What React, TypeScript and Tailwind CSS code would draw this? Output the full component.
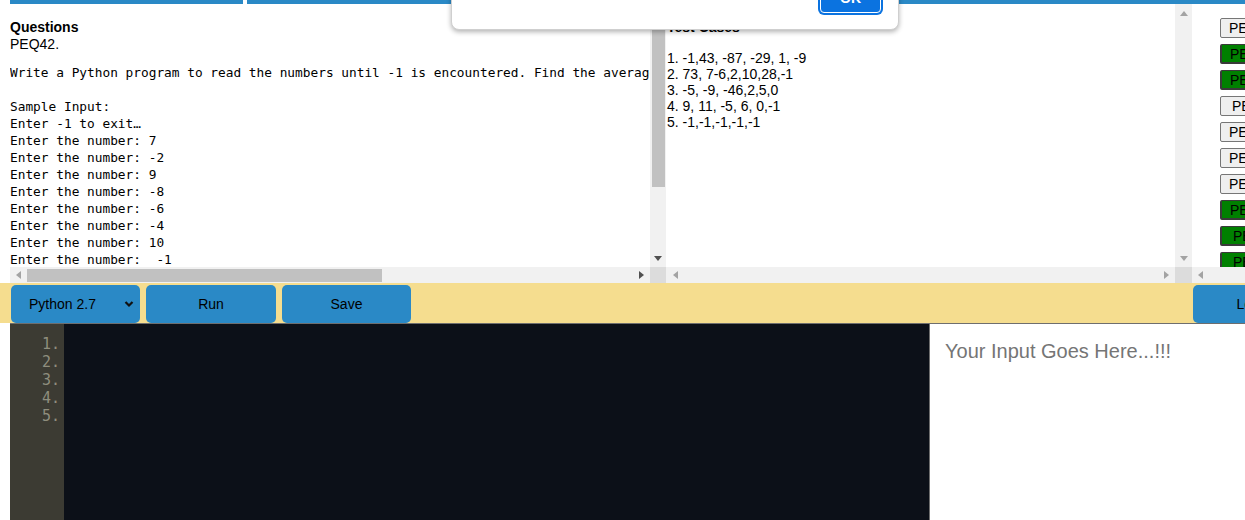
import React from "react";

const BLUE = "bg-[#2a89c6]";

function TriUp({ dark }: { dark?: boolean }) {
  return (
    <svg width="8" height="5" viewBox="0 0 8 5">
      <polygon points="0,5 8,5 4,0" fill={dark ? "#505050" : "#a3a3a3"} />
    </svg>
  );
}
function TriDown({ dark }: { dark?: boolean }) {
  return (
    <svg width="8" height="5" viewBox="0 0 8 5">
      <polygon points="0,0 8,0 4,5" fill={dark ? "#505050" : "#a3a3a3"} />
    </svg>
  );
}
function TriLeft({ dark }: { dark?: boolean }) {
  return (
    <svg width="5" height="8" viewBox="0 0 5 8">
      <polygon points="5,0 5,8 0,4" fill={dark ? "#505050" : "#a3a3a3"} />
    </svg>
  );
}
function TriRight({ dark }: { dark?: boolean }) {
  return (
    <svg width="5" height="8" viewBox="0 0 5 8">
      <polygon points="0,0 0,8 5,4" fill={dark ? "#505050" : "#a3a3a3"} />
    </svg>
  );
}

const sampleLines = [
  "Sample Input:",
  "Enter -1 to exit…",
  "Enter the number: 7",
  "Enter the number: -2",
  "Enter the number: 9",
  "Enter the number: -8",
  "Enter the number: -6",
  "Enter the number: -4",
  "Enter the number: 10",
  "Enter the number:  -1",
  "Sample Output:",
  "Average: 1.0",
];

const testCases = [
  "1. -1,43, -87, -29, 1, -9",
  "2. 73, 7-6,2,10,28,-1",
  "3. -5, -9, -46,2,5,0",
  "4. 9, 11, -5, 6, 0,-1",
  "5. -1,-1,-1,-1,-1",
];

const qButtons: { label: string; green: boolean; shift: boolean }[] = [
  { label: "PEQ40.", green: false, shift: false },
  { label: "PEQ41.", green: true, shift: false },
  { label: "PEQ42.", green: true, shift: false },
  { label: "PEQ43.", green: false, shift: true },
  { label: "PEQ44.", green: false, shift: false },
  { label: "PEQ45.", green: false, shift: false },
  { label: "PEQ46.", green: false, shift: false },
  { label: "PEQ47.", green: true, shift: false },
  { label: "PEQ48.", green: true, shift: true },
  { label: "PEQ49.", green: true, shift: true },
];

export default function App() {
  return (
    <div className="relative w-[1245px] h-[520px] overflow-hidden bg-white font-['Liberation_Sans',Arial,sans-serif] text-black">
      {/* top tab bar */}
      <div className="flex h-[4px] pl-[10px] gap-[4px]">
        <div className={`w-[233px] ${BLUE}`} />
        <div className={`flex-1 ${BLUE}`} />
      </div>

      {/* panels */}
      <div className="flex h-[263px]">
        <div className="w-[10px] shrink-0" />
        {/* questions */}
        <div className="w-[640px] shrink-0 overflow-hidden pt-[15px]">
          <div className="text-[14px] leading-[17px] font-bold">Questions</div>
          <div className="text-[14px] leading-[17px]">PEQ42.</div>
          <pre className="mt-[11px] font-['DejaVu_Sans_Mono',monospace] text-[12.8px] leading-[17px] whitespace-pre">
            {"Write a Python program to read the numbers until -1 is encountered. Find the average of the numbers excluding -1.\n\n"}
            {sampleLines.join("\n")}
          </pre>
        </div>
        {/* vscroll left */}
        <div className="w-[16px] shrink-0 bg-[#f1f1f1] flex flex-col items-center">
          <div className="h-[16px] w-full flex items-center justify-center">
            <TriUp dark />
          </div>
          <div className="h-[167px] w-[13px] bg-[#c1c1c1]" />
          <div className="flex-1" />
          <div className="h-[18px] w-full flex items-center justify-center">
            <TriDown dark />
          </div>
        </div>
        {/* test cases */}
        <div className="w-[509px] shrink-0 overflow-hidden pt-[15px] pl-[1px]">
          <div className="text-[14px] leading-[17px] font-bold">Test Cases</div>
          <div className="mt-[14px] text-[14px] leading-[16px]">
            {testCases.map((t) => (
              <div key={t}>{t}</div>
            ))}
          </div>
        </div>
        {/* vscroll middle */}
        <div className="w-[17px] shrink-0 bg-[#f1f1f1] flex flex-col items-center justify-between">
          <div className="h-[18px] w-full flex items-center justify-center">
            <TriUp />
          </div>
          <div className="h-[18px] w-full flex items-center justify-center">
            <TriDown />
          </div>
        </div>
        {/* question list */}
        <div className="flex-1 overflow-hidden pt-[14px] pl-[28px] flex flex-col gap-[6px]">
          {qButtons.map((b) => (
            <div
              key={b.label}
              className={`h-[20px] w-[80px] shrink-0 text-[14px] leading-[18px] rounded-[2px] ${
                b.shift ? "pl-[11px]" : "pl-[8px]"
              } ${
                b.green
                  ? "bg-[#008000] border border-[#3a3a3a] border-l-2 border-b-2"
                  : "bg-[#efefef] border border-[#767676]"
              }`}
            >
              {b.label}
            </div>
          ))}
        </div>
      </div>

      {/* horizontal scrollbars */}
      <div className="flex h-[16px]">
        <div className="w-[10px] shrink-0" />
        <div className="w-[640px] shrink-0 bg-[#f1f1f1] flex items-center">
          <div className="w-[16px] flex justify-center">
            <TriLeft />
          </div>
          <div className="ml-[1px] w-[355px] h-[13px] bg-[#c1c1c1]" />
          <div className="flex-1" />
          <div className="w-[18px] flex justify-center">
            <TriRight dark />
          </div>
        </div>
        <div className="w-[16px] shrink-0 bg-[#dcdcdc]" />
        <div className="w-[509px] shrink-0 bg-[#f1f1f1] flex items-center justify-between">
          <div className="w-[18px] flex justify-center">
            <TriLeft />
          </div>
          <div className="w-[18px] flex justify-center">
            <TriRight />
          </div>
        </div>
        <div className="w-[17px] shrink-0 bg-[#dcdcdc]" />
        <div className="flex-1 bg-[#f1f1f1] flex items-center">
          <div className="w-[17px] flex justify-center">
            <TriLeft />
          </div>
        </div>
      </div>

      {/* toolbar */}
      <div className="flex h-[40px] bg-[#f5dd8f] pl-[11px] pt-[2px] gap-[6px]">
        <div className={`w-[129px] h-[38px] rounded-[5px] ${BLUE} flex items-center pl-[18px] pr-[6px] text-[14px]`}>
          <span className="flex-1">Python 2.7</span>
          <svg width="10" height="8" viewBox="0 0 10 8">
            <polyline points="1.5,2 5,5.5 8.5,2" fill="none" stroke="#111" strokeWidth="2.2" />
          </svg>
        </div>
        <div className={`w-[130px] h-[38px] rounded-[5px] ${BLUE} flex items-center justify-center text-[14px]`}>Run</div>
        <div className={`w-[129px] h-[38px] rounded-[5px] ${BLUE} flex items-center justify-center text-[14px]`}>Save</div>
        <div className="flex-1" />
        <div className="w-[52px] overflow-hidden shrink-0">
          <div className={`w-[130px] h-[38px] rounded-[5px] ${BLUE} flex items-center justify-center text-[14px]`}>Logout</div>
        </div>
      </div>

      {/* editor + input */}
      <div className="flex h-[197px] pl-[10px]">
        <div className="flex flex-1 border-t border-[#6e6e6e]">
          <div className="w-[54px] shrink-0 bg-[#3c3b33] pt-[11px] pr-[4px] text-right font-['DejaVu_Sans_Mono',monospace] text-[15px] leading-[18px] text-[#8f8e7e]">
            <div>1.</div>
            <div>2.</div>
            <div>3.</div>
            <div>4.</div>
            <div>5.</div>
          </div>
          <div className="flex-1 bg-[#0c1018]" />
          <div className="w-[316px] shrink-0 border-l border-[#6e6e6e] bg-white pl-[15px] pt-[16px] text-[20px] leading-[23px] text-[#757575]">
            Your Input Goes Here...!!!
          </div>
        </div>
      </div>

      {/* alert dialog */}
      <div className="absolute left-[451px] top-[-20px] w-[448px] h-[50px] bg-white rounded-[8px] border border-[#cfcfcf] shadow-[0_2px_5px_rgba(0,0,0,0.3)]">
        <div className="absolute right-[15px] bottom-[14px] w-[65px] h-[34px] rounded-[6px] bg-[#0b73e0] p-[2px]">
          <div className="w-full h-full rounded-[4px] border border-white bg-[#0b73e0] flex items-center justify-center text-white text-[14px] font-bold">
            OK
          </div>
        </div>
      </div>
    </div>
  );
}
